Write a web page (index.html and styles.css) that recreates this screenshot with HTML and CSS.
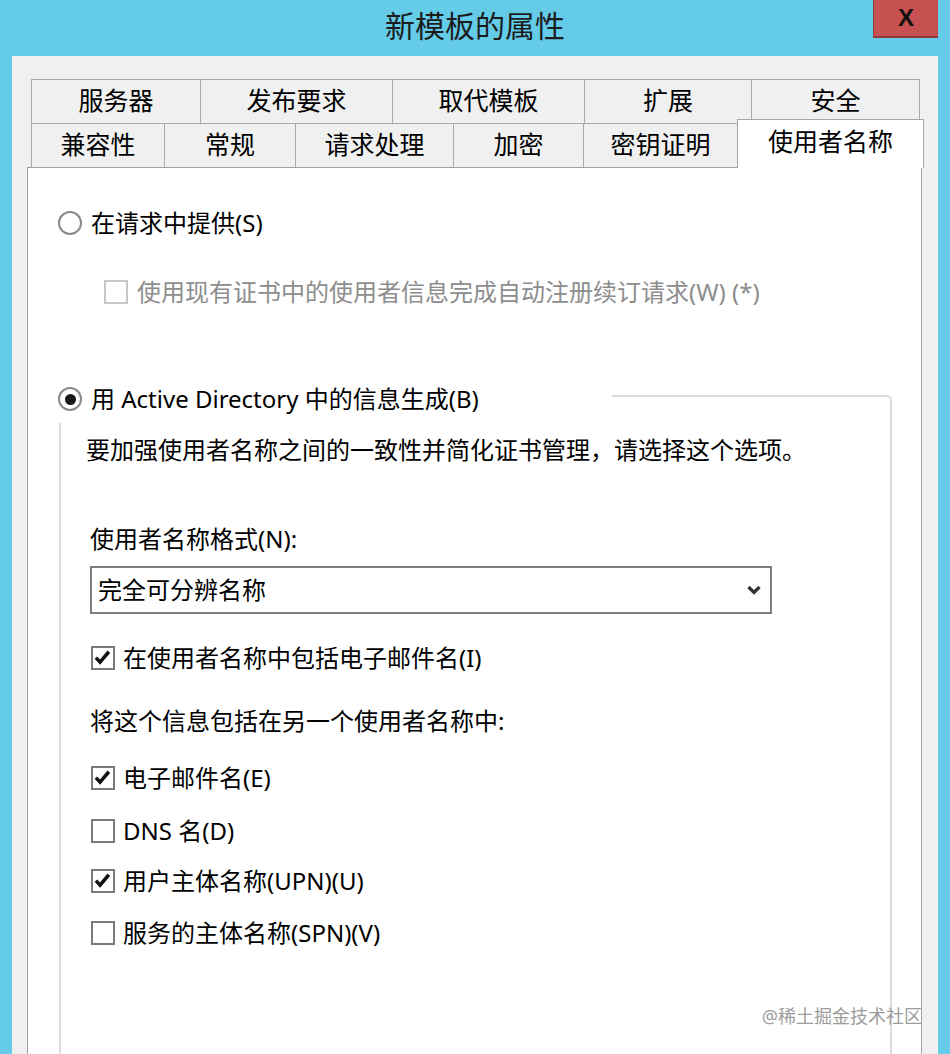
FILE: index.html
```html
<!DOCTYPE html>
<html lang="zh-CN">
<head>
    <meta charset="UTF-8">
    <meta name="viewport" content="width=device-width, initial-scale=1.0">
    <title>新模板的属性</title>
    <link rel="stylesheet" href="styles.css">
</head>
<body>
    <div class="titlebar">
        <span class="title">新模板的属性</span>
        <button class="close">X</button>
    </div>
    <div class="window">
        <div class="tab_row back">
            <div class="tab">服务器</div>
            <div class="tab">发布要求</div>
            <div class="tab">取代模板</div>
            <div class="tab">扩展</div>
            <div class="tab">安全</div>
        </div>
        <div class="tab_row front">
            <div class="tab">兼容性</div>
            <div class="tab">常规</div>
            <div class="tab">请求处理</div>
            <div class="tab">加密</div>
            <div class="tab">密钥证明</div>
            <div class="tab selected">使用者名称</div>
        </div>
        <div class="panel">
            <div class="option first">
                <span class="radio"></span>
                <span class="text">在请求中提供(S)</span>
            </div>
            <div class="option renew disabled">
                <span class="check"></span>
                <span class="text">使用现有证书中的使用者信息完成自动注册续订请求(W) (*)</span>
            </div>

            <div class="group">
                <div class="group_head">
                    <div class="option head_option">
                        <span class="radio on"></span>
                        <span class="text">用 Active Directory 中的信息生成(B)</span>
                    </div>
                </div>
                <div class="group_body">
                    <div class="line desc">要加强使用者名称之间的一致性并简化证书管理，请选择这个选项。</div>
                    <div class="line label_format">使用者名称格式(N):</div>
                    <div class="select">
                        <span class="text">完全可分辨名称</span>
                        <svg width="16" height="12" viewBox="0 0 16 12"><polyline points="2.5,3 8,8.5 13.5,3" fill="none" stroke="#333" stroke-width="3.2"/></svg>
                    </div>
                    <div class="option include_mail">
                        <span class="check"><svg viewBox="0 0 24 24"><path d="M3.5 11.5 L8.5 17 L19 4.5" fill="none" stroke="#111" stroke-width="4.2"/></svg></span>
                        <span class="text">在使用者名称中包括电子邮件名(I)</span>
                    </div>
                    <div class="line label_alt">将这个信息包括在另一个使用者名称中:</div>
                    <div class="option alt e">
                        <span class="check"><svg viewBox="0 0 24 24"><path d="M3.5 11.5 L8.5 17 L19 4.5" fill="none" stroke="#111" stroke-width="4.2"/></svg></span>
                        <span class="text">电子邮件名(E)</span>
                    </div>
                    <div class="option alt d">
                        <span class="check"></span>
                        <span class="text">DNS 名(D)</span>
                    </div>
                    <div class="option alt u">
                        <span class="check"><svg viewBox="0 0 24 24"><path d="M3.5 11.5 L8.5 17 L19 4.5" fill="none" stroke="#111" stroke-width="4.2"/></svg></span>
                        <span class="text">用户主体名称(UPN)(U)</span>
                    </div>
                    <div class="option alt v">
                        <span class="check"></span>
                        <span class="text">服务的主体名称(SPN)(V)</span>
                    </div>
                </div>
            </div>
        </div>
    </div>
    <div class="watermark">@稀土掘金技术社区</div>
</body>
</html>
```

FILE: styles.css
```css
html, body {
    height: 1054px;
}
body {
    margin: 0;
    overflow: hidden;
    background-color: #64cbe9;
    font-family: "Noto Sans", "Noto Sans CJK SC", sans-serif;
    color: #000;
    position: relative;
}
.titlebar {
    height: 56px;
    display: flex;
    justify-content: center;
    align-items: center;
    padding-bottom: 8px;
    box-sizing: border-box;
}
.title {
    font-size: 30px;
    color: #1c1c1c;
}
.close {
    position: absolute;
    top: 0;
    right: 12px;
    width: 65px;
    height: 38px;
    border: none;
    border-left: 1px solid #8d3a3a;
    border-bottom: 2px solid #8d3a3a;
    background-color: #c75050;
    color: #111;
    font-family: "Liberation Sans", Arial, sans-serif;
    font-weight: bold;
    font-size: 24px;
    padding: 0;
}
.window {
    margin: 0 12px;
    height: 998px;
    background-color: #f0f0f0;
    padding: 23px 16px 0 15px;
    box-sizing: border-box;
    overflow: hidden;
}

/* tabs */
.tab_row {
    display: grid;
    margin-left: 4px;
    font-size: 25px;
}
.tab_row.back {
    grid-template-columns: 170px 192px 192px 167px 168px;
}
.tab_row.front {
    grid-template-columns: 134px 131px 158px 130px 154px 186px;
}
.tab {
    height: 44px;
    line-height: 40px;
    text-align: center;
    background-color: #f0f0f0;
    border-top: 1px solid #a9a9a9;
    border-right: 1px solid #a9a9a9;
    box-sizing: border-box;
}
.tab:first-child {
    border-left: 1px solid #a9a9a9;
}
.tab.selected {
    position: relative;
    z-index: 1;
    background-color: #fff;
    border-left: 1px solid #a9a9a9;
    margin-top: -4px;
    margin-left: -1px;
    height: 49px;
    margin-bottom: -1px;
    line-height: 43px;
}
.panel {
    background-color: #fff;
    border: 1px solid #a0a0a0;
    height: 900px;
    box-sizing: border-box;
    padding-top: 39px;
}

/* controls */
.option {
    display: flex;
    align-items: center;
    height: 32px;
    font-size: 24px;
    gap: 8px;
}
.option .text,
.select .text {
    margin-bottom: 4px;
}
.line {
    height: 32px;
    line-height: 28px;
    font-size: 24px;
}
.radio {
    width: 24px;
    height: 24px;
    border-radius: 50%;
    border: 2px solid #8a8a8a;
    background-color: #fff;
    box-sizing: border-box;
    flex: none;
    margin-right: 1px;
    display: flex;
    align-items: center;
    justify-content: center;
}
.radio.on::after {
    content: "";
    width: 11px;
    height: 11px;
    border-radius: 50%;
    background-color: #1a1a1a;
}
.check {
    width: 24px;
    height: 24px;
    border: 2px solid #7a7a7a;
    background-color: #fff;
    box-sizing: border-box;
    flex: none;
    display: flex;
}
.check svg {
    width: 20px;
    height: 20px;
}
.disabled {
    color: #8d8d8d;
}
.disabled .check {
    border-color: #c8c8c8;
    margin-right: 1px;
}
.first {
    margin-left: 30px;
}
.renew {
    margin-left: 76px;
    margin-top: 37px;
}

/* group box */
.group {
    margin-left: 31px;
    width: 833px;
    margin-top: 67px;
}
.group_head {
    display: flex;
    height: 48px;
}
.group_head::after {
    content: "";
    flex: 1;
    margin-top: 20px;
    border-top: 2px solid #dcdcdc;
    border-right: 2px solid #dcdcdc;
    border-top-right-radius: 5px;
}
.head_option {
    width: 554px;
    flex: none;
    margin-left: -1px;
    margin-top: 8px;
}
.group_body {
    border-left: 2px solid #dcdcdc;
    border-right: 2px solid #dcdcdc;
    height: 700px;
    padding-left: 29px;
    padding-top: 13px;
}
.desc {
    margin-left: -4px;
}
.label_format {
    margin-top: 57px;
}
.select {
    margin-top: 9px;
    width: 682px;
    height: 48px;
    border: 2px solid #7d7d7d;
    box-sizing: border-box;
    display: flex;
    align-items: center;
    justify-content: space-between;
    padding: 0 8px 0 6px;
    font-size: 24px;
}
.include_mail {
    margin-top: 28px;
    margin-left: 1px;
}
.label_alt {
    margin-top: 33px;
}
.alt {
    margin-left: 1px;
}
.alt.e {
    margin-top: 23px;
}
.alt.d {
    margin-top: 21px;
}
.alt.u {
    margin-top: 18px;
}
.alt.v {
    margin-top: 20px;
}
.watermark {
    position: absolute;
    right: 28px;
    bottom: 26px;
    font-size: 18px;
    color: #9c9c9c;
}
```
